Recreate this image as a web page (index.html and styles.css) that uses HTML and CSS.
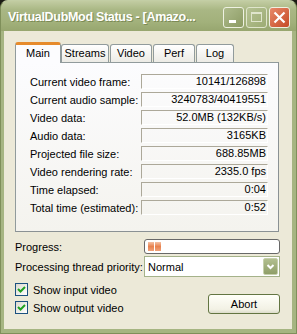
FILE: index.html
```html
<!DOCTYPE html>
<html lang="en">
<head>
    <meta charset="UTF-8">
    <title>VirtualDubMod Status</title>
    <link rel="stylesheet" href="styles.css">
</head>
<body>
<div class="window">
    <div class="titlebar">
        <span class="title">VirtualDubMod Status - [Amazo...</span>
        <div class="tbtns">
            <span class="tbtn"><svg width="21" height="21" viewBox="0 0 21 21"><rect x="6" y="13" width="7" height="3" fill="#fff"/></svg></span>
            <span class="tbtn dim"><svg width="21" height="21" viewBox="0 0 21 21"><rect x="5.5" y="5.5" width="10" height="9" fill="none" stroke="#dfe5cc" stroke-width="1"/><rect x="5" y="5" width="11" height="2" fill="#dfe5cc"/></svg></span>
            <span class="tbtn close"><svg width="21" height="21" viewBox="0 0 21 21"><path d="M5.5 5.5 L15.5 15.5 M15.5 5.5 L5.5 15.5" stroke="#fff" stroke-width="2.2"/></svg></span>
        </div>
    </div>
    <div class="client">
        <div class="tabs">
            <div class="tab active">Main</div>
            <div class="tab w48">Streams</div>
            <div class="tab w42">Video</div>
            <div class="tab w42">Perf</div>
            <div class="tab w38">Log</div>
        </div>
        <div class="page">
            <div class="row"><span class="lbl">Current video frame:</span><span class="val">10141/126898</span></div>
            <div class="row"><span class="lbl">Current audio sample:</span><span class="val">3240783/40419551</span></div>
            <div class="row"><span class="lbl">Video data:</span><span class="val">52.0MB (132KB/s)</span></div>
            <div class="row"><span class="lbl">Audio data:</span><span class="val">3165KB</span></div>
            <div class="row"><span class="lbl">Projected file size:</span><span class="val">688.85MB</span></div>
            <div class="row"><span class="lbl">Video rendering rate:</span><span class="val">2335.0 fps</span></div>
            <div class="row"><span class="lbl">Time elapsed:</span><span class="val">0:04</span></div>
            <div class="row"><span class="lbl">Total time (estimated):</span><span class="val">0:52</span></div>
        </div>
        <div class="field progress-row">
            <span class="flbl">Progress:</span>
            <div class="progress"><span class="blk"></span><span class="blk"></span></div>
        </div>
        <div class="field prio-row">
            <span class="flbl">Processing thread priority:</span>
            <div class="combo">
                <span class="combo-text">Normal</span>
                <span class="drop"><svg width="11" height="11" viewBox="0 0 11 11"><path d="M2.5 4 L5.5 7 L8.5 4" fill="none" stroke="#fff" stroke-width="2"/></svg></span>
            </div>
        </div>
        <div class="bottom">
            <div class="checks">
                <label class="chk"><span class="box"><svg width="11" height="11" viewBox="0 0 11 11"><path d="M2 5 L4.5 7.5 L9 3" fill="none" stroke="#21a121" stroke-width="2"/></svg></span>Show input video</label>
                <label class="chk"><span class="box"><svg width="11" height="11" viewBox="0 0 11 11"><path d="M2 5 L4.5 7.5 L9 3" fill="none" stroke="#21a121" stroke-width="2"/></svg></span>Show output video</label>
            </div>
            <button class="abort">Abort</button>
        </div>
    </div>
</div>
</body>
</html>
```

FILE: styles.css
```css
body {
    margin: 0;
    background: #1b1b14;
}
.window {
    width: 297px;
    height: 334px;
    box-sizing: border-box;
    border-radius: 8px 8px 0 0;
    background: #a6b582;
    border: 1px solid #7f8f5a;
    border-top-color: #c3cea5;
    padding: 0 4px 4px 3px;
    display: flex;
    flex-direction: column;
}
.titlebar {
    height: 30px;
    flex: none;
    display: flex;
    align-items: center;
    justify-content: space-between;
    background: linear-gradient(#c2cca2, #a9b784 30%, #a2b17b 70%, #97a66f);
    margin: 0 -4px 0 -3px;
    padding: 0 6px 0 7px;
    border-radius: 7px 7px 0 0;
}
.title {
    color: #fff;
    font-family: "Liberation Sans", Arial, sans-serif;
    font-weight: bold;
    font-size: 12.5px;
    letter-spacing: -0.3px;
    white-space: nowrap;
    text-shadow: 1px 1px 0 #7b8a55;
    padding-top: 2px;
}
.tbtns {
    display: flex;
    gap: 2px;
    padding-top: 2px;
}
.tbtn {
    width: 21px;
    height: 21px;
    box-sizing: border-box;
    border: 1px solid #eef1e2;
    border-radius: 3px;
    background: linear-gradient(135deg, #aebb8c, #8c9b64);
    display: block;
}
.tbtn svg {
    display: block;
    margin: -1px;
}
.tbtn.dim {
    background: linear-gradient(135deg, #b4c192, #9dac74);
    border-color: #dfe5cc;
}
.tbtn.close {
    background: linear-gradient(135deg, #e8896a, #c54b26);
}
.client {
    flex: 1;
    background: #ece9d8;
    padding: 11px 12px 0 11px;
    font-family: "Liberation Sans", Arial, sans-serif;
    font-size: 11px;
    color: #000;
}
.tabs {
    display: flex;
    height: 20px;
    align-items: flex-end;
    position: relative;
    z-index: 1;
}
.tab {
    width: 42px;
    height: 18px;
    box-sizing: border-box;
    border: 1px solid #919b9c;
    border-bottom: none;
    border-radius: 3px 3px 0 0;
    background: linear-gradient(#ffffff, #ecebe5);
    text-align: center;
    line-height: 17px;
    margin-right: 1px;
}
.tab.active {
    width: 46px;
    height: 21px;
    margin-bottom: -1px;
    background: #fcfcfe;
    border-top: 3px solid #e68b2c;
    line-height: 17px;
    margin-right: 0;
}
.w48 { width: 48px; }
.w42 { width: 42px; }
.w38 { width: 38px; }
.page {
    width: 264px;
    height: 170px;
    box-sizing: border-box;
    border: 1px solid #919b9c;
    border-right-color: #8a9194;
    border-bottom-color: #8a9194;
    background: linear-gradient(#fcfcfe, #f4f3ee);
    padding: 11px 10px 0 14px;
    display: flex;
    flex-direction: column;
    gap: 3px;
}
.row {
    display: flex;
    height: 15px;
    align-items: center;
}
.lbl {
    width: 111px;
}
.val {
    width: 127px;
    height: 15px;
    box-sizing: border-box;
    border: 1px solid #aca899;
    border-right-color: #fff;
    border-bottom-color: #fff;
    text-align: right;
    padding-right: 1px;
    line-height: 13px;
}
.field {
    display: flex;
    align-items: center;
    justify-content: space-between;
}
.progress-row {
    margin-top: 7px;
}
.progress {
    width: 136px;
    height: 15px;
    box-sizing: border-box;
    border: 1px solid #686868;
    border-radius: 3px;
    background: #fff;
    padding: 2px 3px;
    display: flex;
    gap: 1px;
}
.blk {
    width: 6px;
    height: 9px;
    background: linear-gradient(#f5c2a6, #e8824f 50%, #f0a27a);
}
.prio-row {
    margin-top: 2px;
}
.combo {
    width: 136px;
    height: 21px;
    box-sizing: border-box;
    border: 1px solid #a5b28a;
    background: #fff;
    display: flex;
    align-items: center;
    justify-content: space-between;
    padding: 0 1px 0 3px;
}
.drop {
    width: 15px;
    height: 17px;
    box-sizing: border-box;
    border: 1px solid #c6d0ac;
    border-radius: 2px;
    background: linear-gradient(#b2bf8f, #8f9e68);
    display: flex;
    align-items: center;
    justify-content: center;
}
.bottom {
    display: flex;
    justify-content: space-between;
    align-items: flex-start;
    margin-top: 6px;
}
.checks {
    display: flex;
    flex-direction: column;
    gap: 5px;
}
.chk {
    display: flex;
    align-items: center;
    gap: 5px;
    height: 13px;
}
.box {
    width: 13px;
    height: 13px;
    box-sizing: border-box;
    border: 1px solid #1c5180;
    background: linear-gradient(135deg, #dcdad0, #fff);
    display: flex;
    align-items: center;
    justify-content: center;
}
.abort {
    margin-top: 11px;
    width: 72px;
    height: 20px;
    border: 1px solid #637542;
    border-radius: 3px;
    background: linear-gradient(#fffff9, #f2f1e4 80%, #dcdccb);
    font-family: "Liberation Sans", Arial, sans-serif;
    font-size: 11px;
    color: #000;
    padding: 0;
}
```
